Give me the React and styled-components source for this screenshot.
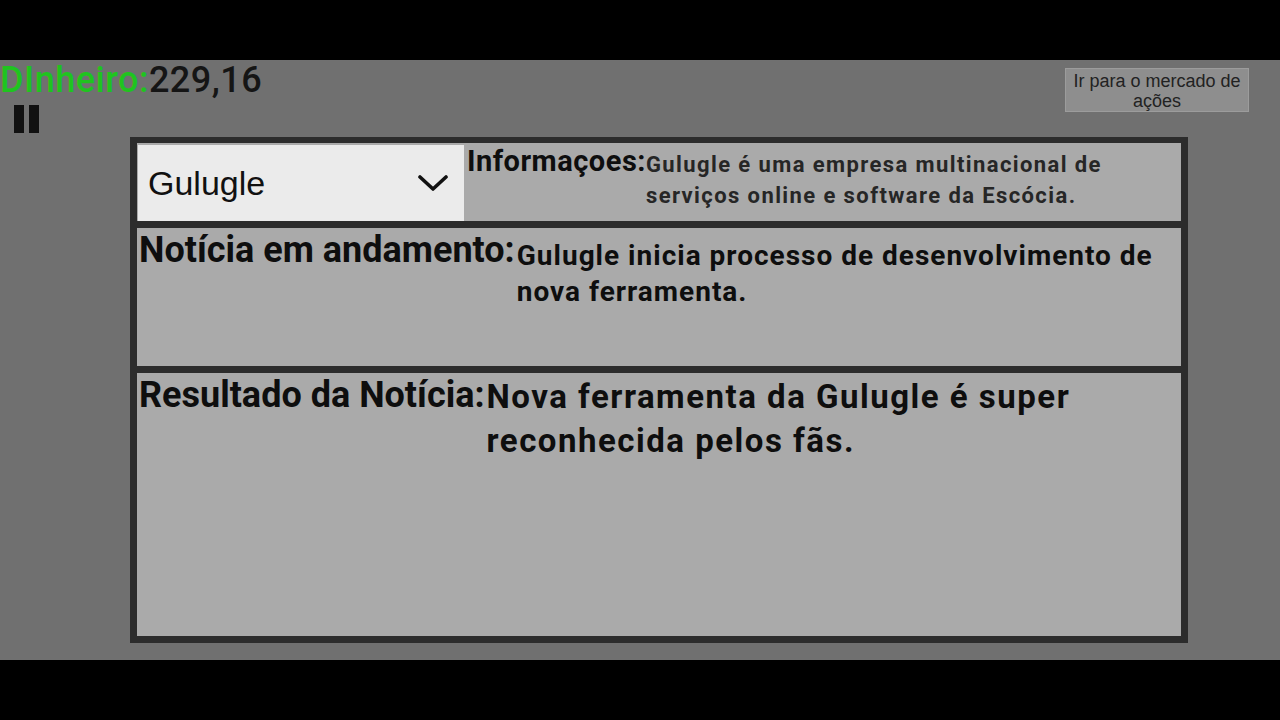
import React from 'react'
import styled, { createGlobalStyle } from 'styled-components'

const GlobalStyle = createGlobalStyle`
  html, body {
    margin: 0;
    padding: 0;
    background: #000;
  }
  body {
    font-family: Roboto, "Liberation Sans", sans-serif;
  }
`;

const Screen = styled.div`
  width: 1280px;
  height: 720px;
  background: #000;
  display: flex;
  flex-direction: column;
  justify-content: center;
`;

const Game = styled.div`
  height: 600px;
  background: #707070;
  display: flex;
  flex-direction: column;
`;

const Hud = styled.div`
  height: 77px;
  display: flex;
  justify-content: space-between;
  align-items: flex-start;
`;

const HudLeft = styled.div`
  display: flex;
  flex-direction: column;
`;

const Money = styled.div`
  font-family: Roboto, sans-serif;
  font-size: 36px;
  font-weight: 500;
  line-height: 41px;
  color: #151515;
  letter-spacing: 0.5px;
  & span {
    color: #1fc41f;
  }
`;

const Pause = styled.button`
  margin: 4px 0 0 14px;
  padding: 0;
  border: none;
  background: none;
  display: flex;
  gap: 5px;
  width: 25px;
  height: 28px;
  cursor: pointer;
  & i {
    width: 10px;
    height: 28px;
    background: #111;
  }
`;

const MarketButton = styled.button`
  margin: 8px 31px 0 0;
  width: 184px;
  height: 44px;
  padding: 2px 4px;
  background: #8e8e8e;
  border: 1px solid #9c9c9c;
  font-family: "Liberation Sans", Arial, sans-serif;
  font-size: 18px;
  line-height: 20px;
  color: #222;
  text-align: center;
`;

const Panel = styled.div`
  margin-left: 130px;
  width: 1058px;
  height: 506px;
  box-sizing: border-box;
  border: 7px solid #2c2c2c;
  border-top-width: 6px;
  background: #aaaaaa;
  display: flex;
  flex-direction: column;
`;

const Row = styled.div`
  display: flex;
  align-items: flex-start;
  height: ${p => p.$h}px;
  padding: ${p => p.$pad || '0 0 0 2px'};
  box-sizing: border-box;
  border-bottom: ${p => (p.$last ? 'none' : '7px solid #2c2c2c')};
  flex-shrink: 0;
`;

const Select = styled.div`
  width: 326px;
  height: 76px;
  margin-top: 2px;
  background: #ebebeb;
  display: flex;
  align-items: center;
  justify-content: space-between;
  padding: 0 16px 0 10px;
  box-sizing: border-box;
  font-family: "Liberation Sans", Arial, sans-serif;
  font-size: 34px;
  color: #111;
  flex-shrink: 0;
`;

const Label = styled.div`
  font-family: Roboto, sans-serif;
  font-weight: 700;
  font-size: ${p => p.$size}px;
  letter-spacing: ${p => p.$ls || 0}px;
  line-height: 1.171;
  color: #0e0e0e;
  white-space: nowrap;
  flex-shrink: 0;
  margin-top: ${p => p.$top || 0}px;
  margin-left: ${p => p.$left || 0}px;
`;

const Text = styled.div`
  flex: 1;
  font-family: Roboto, sans-serif;
  font-weight: 700;
  font-size: ${p => p.$size}px;
  line-height: ${p => p.$lh}px;
  letter-spacing: ${p => p.$ls}px;
  color: ${p => p.$color || '#0e0e0e'};
  margin-top: ${p => p.$top}px;
  margin-left: ${p => p.$left || 0}px;
`;

function Chevron() {
  return (
    <svg width="30" height="18" viewBox="0 0 30 18">
      <path d="M2 3 L15 15 L28 3" fill="none" stroke="#111" strokeWidth="3.6" strokeLinecap="round" strokeLinejoin="round" />
    </svg>
  )
}

export default function App() {
  return (
    <>
      <GlobalStyle />
      <Screen>
        <Game>
          <Hud>
            <HudLeft>
              <Money><span>DInheiro:</span>229,16</Money>
              <Pause aria-label="pause"><i /><i /></Pause>
            </HudLeft>
            <MarketButton>Ir para o mercado de ações</MarketButton>
          </Hud>
          <Panel>
            <Row $h={85} $pad="0 0 0 1px">
              <Select>
                Gulugle
                <Chevron />
              </Select>
              <Label $size={29} $ls={0.5} $top={2} $left={3}>Informaçoes:</Label>
              <Text $size={22} $lh={31} $ls={1.4} $top={6} $color="#262626">
                Gulugle é uma empresa multinacional de serviços online e software da Escócia.
              </Text>
            </Row>
            <Row $h={145}>
              <Label $size={36} $top={1}>Notícia em andamento:</Label>
              <Text $size={28} $lh={36} $ls={1} $top={10} $left={2}>
                Gulugle inicia processo de desenvolvimento de nova ferramenta.
              </Text>
            </Row>
            <Row $h={263} $last>
              <Label $size={36} $top={1}>Resultado da Notícia:</Label>
              <Text $size={33} $lh={44} $ls={1.5} $top={2} $left={2}>
                Nova ferramenta da Gulugle é super reconhecida pelos fãs.
              </Text>
            </Row>
          </Panel>
        </Game>
      </Screen>
    </>
  )
}
